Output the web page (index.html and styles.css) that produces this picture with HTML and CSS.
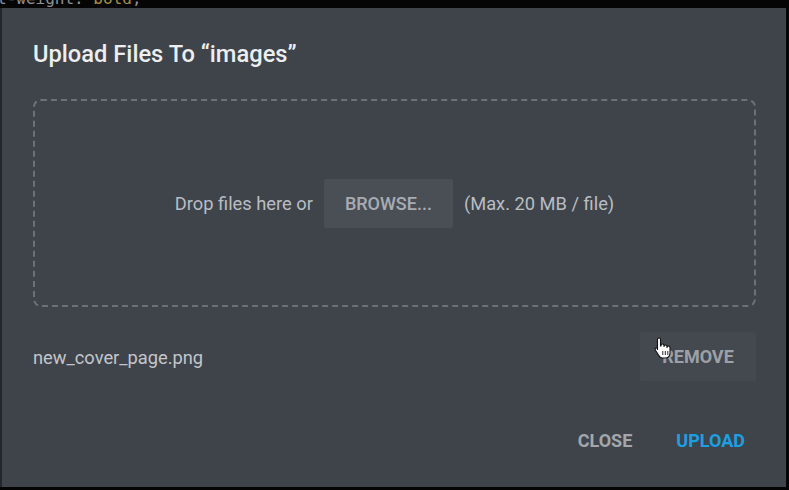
FILE: index.html
```html
<!DOCTYPE html>
<html>
<head>
<meta charset="utf-8">
<link rel="stylesheet" href="styles.css">
</head>
<body>
<pre class="code"><span class="prop">t-weight:</span> <span class="val">bold</span>;</pre>
<div class="dialog">
  <h1 class="title">Upload Files To “images”</h1>
  <div class="dropzone">
    <span class="drop-text">Drop files here or</span>
    <button class="btn browse">BROWSE...</button>
    <span class="drop-text">(Max. 20 MB / file)</span>
  </div>
  <div class="file-row">
    <span class="file-name">new_cover_page.png</span>
    <button class="btn remove">REMOVE</button>
  </div>
  <div class="actions">
    <button class="btn text close">CLOSE</button>
    <button class="btn text upload">UPLOAD</button>
  </div>
</div>
<svg class="cursor" width="20" height="23" viewBox="0 0 20 23">
  <path d="M3.5 2.5 a1.5 1.5 0 0 1 3 0 V9 h0.5 V8.5 a1.5 1.5 0 0 1 3 0 V9.5 a1.5 1.5 0 0 1 3 0 V10.5 a1.5 1.5 0 0 1 3 0 V16 c0 3 -2 5 -5 5 H8.5 c-2 0 -3 -1 -4 -3 L1.3 13 a1.3 1.3 0 0 1 2.2 -1.4 L3.5 12.5 Z" fill="#fff" stroke="#111" stroke-width="1.1" stroke-linejoin="round"/>
  <path d="M8.8 14 v4 M11.3 14 v4 M13.8 14 v4" stroke="#111" stroke-width="0.9"/>
</svg>
</body>
</html>
```
FILE: styles.css
```css
html, body {
  margin: 0;
  padding: 0;
  width: 789px;
  height: 490px;
  overflow: hidden;
  background: #050505;
  font-family: Roboto, "Liberation Sans", sans-serif;
}
.code {
  margin: -10px 0 0 -3px;
  font-family: "DejaVu Sans Mono", monospace;
  font-size: 16px;
  line-height: 17px;
  color: #8d9196;
}
.code .val { color: #a88f43; }
.dialog {
  position: absolute;
  left: 2px;
  top: 8px;
  width: 784px;
  height: 479px;
  background: #3f444b;
  box-sizing: border-box;
  padding: 0 30px 0 31px;
  display: flex;
  flex-direction: column;
  box-shadow: -2px 0 0 #23272b;
}
.title {
  margin: 32px 0 0;
  font-size: 23.7px;
  line-height: 28px;
  font-weight: 500;
  color: #eceeef;
}
.dropzone {
  margin-top: 31px;
  height: 208px;
  box-sizing: border-box;
  border: 2px dashed #6c7178;
  border-radius: 8px;
  display: flex;
  align-items: center;
  justify-content: center;
  gap: 11px;
}
.drop-text {
  font-size: 18.3px;
  color: #b9bdc2;
}
.btn {
  font-family: Roboto, "Liberation Sans", sans-serif;
  font-size: 18px;
  font-weight: 700;
  border: none;
  cursor: pointer;
  padding: 0;
}
.browse {
  width: 129px;
  height: 49px;
  background: #4a4f56;
  color: #a8acb2;
  border-radius: 2px;
  font-weight: 500;
}
.file-row {
  margin-top: 25px;
  display: flex;
  align-items: center;
  justify-content: space-between;
}
.file-name {
  font-size: 18.3px;
  color: #c3c6ca;
  padding-top: 2px;
}
.remove {
  width: 116px;
  height: 49px;
  background: #444950;
  color: #9da1a7;
  border-radius: 2px;
}
.actions {
  margin-top: 39px;
  display: flex;
  justify-content: flex-end;
  gap: 22px;
}
.text {
  background: transparent;
  height: 40px;
  padding: 0 11px;
}
.close { color: #a3a7ad; }
.upload { color: #1c9fe3; }
.cursor {
  position: absolute;
  left: 654px;
  top: 337px;
}
```
